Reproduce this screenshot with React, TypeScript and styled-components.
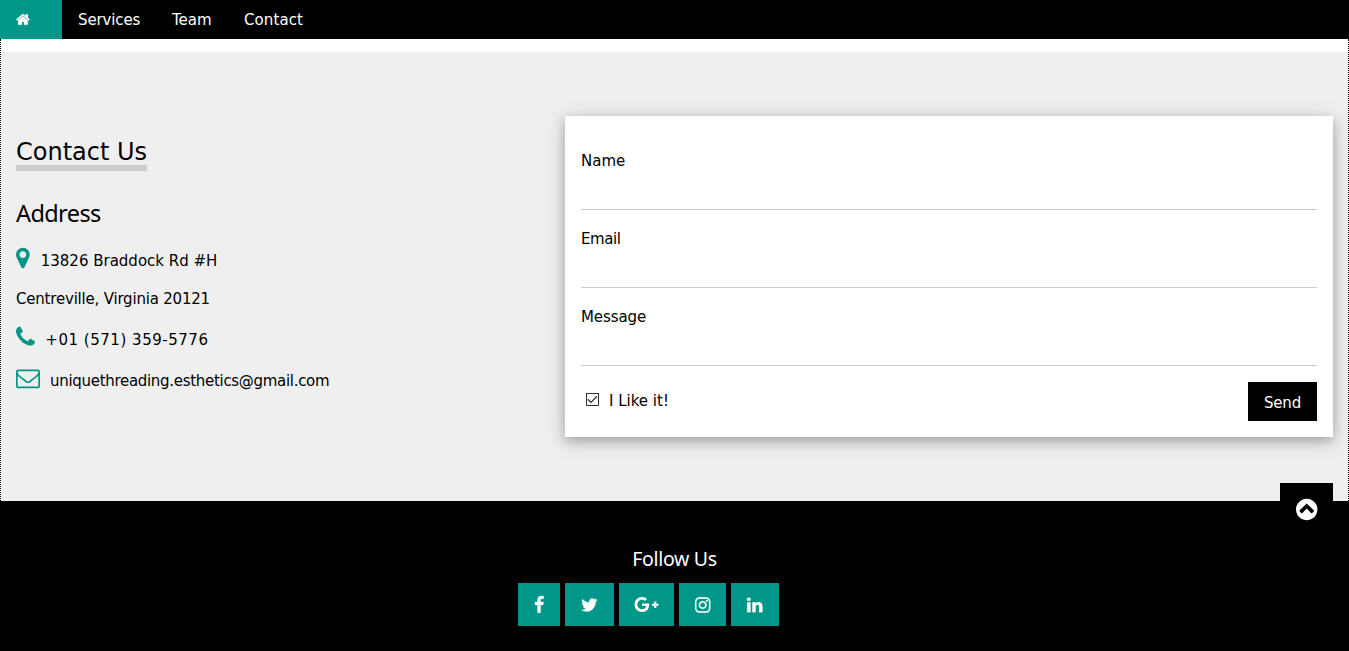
import React from "react";
import styled, { createGlobalStyle } from "styled-components";
import { FaGooglePlusG } from "react-icons/fa";

const TEAL = "#009688";

const GlobalStyle = createGlobalStyle`
  *, *::before, *::after { box-sizing: border-box; }
  body {
    margin: 0;
    overflow: hidden;
    background: #fff;
    color: #000;
    font: 15px/22.5px Verdana, "DejaVu Sans", sans-serif;
  }
`;

const Page = styled.div`
  display: flex;
  flex-direction: column;
  height: 651px;
`;

const NavBar = styled.nav`
  display: flex;
  height: 39px;
  background: #000;
`;

const NavLink = styled.a<{ $active?: boolean; $width: number; $spacing?: number }>`
  display: flex;
  align-items: center;
  width: ${(p) => p.$width}px;
  padding: ${(p) => (p.$active ? 0 : 2)}px 0 0 16px;
  color: #fff;
  background: ${(p) => (p.$active ? TEAL : "transparent")};
  letter-spacing: ${(p) => p.$spacing ?? 0}px;
  white-space: nowrap;
`;

const Content = styled.main`
  height: 462px;
  padding-top: 13px;
  border: dotted #000;
  border-width: 0 1px;
`;

const ContactSection = styled.section`
  display: flex;
  justify-content: space-between;
  height: 449px;
  padding: 64px 15px;
  background: #efefef;
`;

const Details = styled.div`
  display: flex;
  flex-direction: column;
  align-items: flex-start;
  padding-top: 17px;
`;

const Title = styled.span`
  height: 38px;
  border-bottom: 6px solid #ccc;
  font-size: 24px;
  line-height: 38px;
`;

const Subtitle = styled.h3`
  margin: 24px 0 0;
  font: 400 23.5px/36px "Segoe UI", "Noto Sans", sans-serif;
  letter-spacing: -0.6px;
`;

const DetailLine = styled.p<{ $top: number; $gap?: number; $spacing?: number }>`
  display: flex;
  align-items: flex-end;
  gap: ${(p) => p.$gap ?? 0}px;
  height: 24px;
  margin: ${(p) => p.$top}px 0 0;
  letter-spacing: ${(p) => p.$spacing ?? 0}px;
  line-height: 18px;
  white-space: nowrap;
  svg { align-self: flex-start; color: ${TEAL}; }
`;

const FormCard = styled.form`
  width: 768px;
  height: 321px;
  padding: 16px;
  background: #fff;
  box-shadow: 0 4px 10px 0 rgba(0, 0, 0, 0.2), 0 4px 20px 0 rgba(0, 0, 0, 0.19);
`;

const Field = styled.label<{ $spacing?: number }>`
  display: flex;
  flex-direction: column;
  height: 78px;
  padding-top: 18px;
  letter-spacing: ${(p) => p.$spacing ?? 0}px;
`;

const Input = styled.input`
  width: 100%;
  height: 37px;
  margin-top: auto;
  padding: 8px 0;
  border: 0;
  border-bottom: 1px solid #ccc;
  outline: 0;
  background: transparent;
  font: inherit;
`;

const FormFooter = styled.div`
  display: flex;
  justify-content: space-between;
  padding-top: 16px;
`;

const CheckLabel = styled.label`
  display: flex;
  align-items: flex-start;
  gap: 10px;
  height: 36px;
  padding: 8px 0 0 5px;
  svg { margin-top: 3px; }
`;

const SendButton = styled.button`
  width: 69px;
  height: 39px;
  padding: 4px 0 0;
  border: 0;
  color: #fff;
  background: #000;
  font: inherit;
  letter-spacing: -0.2px;
`;

const Footer = styled.footer`
  position: relative;
  display: flex;
  flex-direction: column;
  align-items: center;
  height: 150px;
  padding-top: 43px;
  background: #000;
  color: #fff;
`;

const TopButton = styled.a`
  position: absolute;
  top: -18px;
  right: 16px;
  display: flex;
  justify-content: center;
  width: 53px;
  height: 52px;
  padding-top: 14px;
  background: #000;
`;

const FollowTitle = styled.h5`
  margin: 0;
  font: 400 19.5px/30px "Segoe UI", "Noto Sans", sans-serif;
  letter-spacing: -0.3px;
`;

const SocialRow = styled.div`
  display: flex;
  gap: 5px;
  width: 313px;
  margin-top: 9px;
`;

const SocialLink = styled.a<{ $width: number }>`
  display: flex;
  align-items: center;
  justify-content: center;
  width: ${(p) => p.$width}px;
  height: 43px;
  background: ${TEAL};
  color: #fff;
`;

const glyphs = {
  home: { x: 64, w: 1664, d: "M1472 992v480q0 26-19 45t-45 19h-384v-384h-256v384h-384q-26 0-45-19t-19-45v-480q0-1 .5-3t.5-3l575-474 575 474q1 2 1 6zm223-69l-62 74q-8 9-21 11h-3q-13 0-21-7l-692-577-692 577q-12 8-24 7-13-2-21-11l-62-74q-8-10-7-23.5t11-21.5l719-599q32-26 76-26t76 26l244 204v-195q0-14 9-23t23-9h192q14 0 23 9t9 23v408l219 182q10 8 11 21.5t-7 23.5z" },
  marker: { x: 384, w: 1024, d: "M1152 640q0-106-75-181t-181-75-181 75-75 181 75 181 181 75 181-75 75-181zm256 0q0 109-33 179l-364 774q-16 33-47.5 52t-67.5 19-67.5-19-46.5-52l-365-774q-33-70-33-179 0-212 150-362t362-150 362 150 150 362z" },
  phone: { x: 192, w: 1408, d: "M1600 1240q0 27-10 70.5t-21 68.5q-21 50-122 106-94 51-186 51-27 0-52.5-3.5t-57.5-12.5-47.5-14.5-55.5-20.5-49-18q-98-35-175-83-128-79-264.5-215.5t-215.5-264.5q-48-77-83-175-3-9-18-49t-20.5-55.5-14.5-47.5-12.5-57.5-3.5-52.5q0-92 51-186 56-101 106-122 25-11 68.5-21t70.5-10q14 0 21 3 18 6 53 76 11 19 30 54t35 63.5 31 53.5q3 4 17.5 25t21.5 35.5 7 28.5q0 20-28.5 50t-62 55-62 53-28.5 46q0 9 5 22.5t8.5 20.5 14 24 11.5 19q76 137 174 235t235 174q2 1 19 11.5t24 14 20.5 8.5 22.5 5q18 0 46-28.5t53-62 55-62 50-28.5q14 0 28.5 7t35.5 21.5 25 17.5q25 15 53.5 31t63.5 35 54 30q70 35 76 53 3 7 3 21z" },
  envelope: { x: 0, w: 1792, d: "M1664 1504v-768q-32 36-69 66-268 206-426 338-51 43-83 67t-86.5 48.5-102.5 24.5h-2q-48 0-102.5-24.5t-86.5-48.5-83-67q-158-132-426-338-37-30-69-66v768q0 13 9.5 22.5t22.5 9.5h1472q13 0 22.5-9.5t9.5-22.5zm0-1051v-24.5l-.5-13-3-12.5-5.5-9-9-7.5-14-2.5h-1472q-13 0-22.5 9.5t-9.5 22.5q0 168 147 284 193 152 401 317 6 5 35 29.5t46 37.5 44.5 31.5 50.5 27.5 43 9h2q20 0 43-9t50.5-27.5 44.5-31.5 46-37.5 35-29.5q208-165 401-317 54-43 100.5-115.5t46.5-131.5zm128-37v1088q0 66-47 113t-113 47h-1472q-66 0-113-47t-47-113v-1088q0-66 47-113t113-47h1472q66 0 113 47t47 113z" },
  facebook: { x: 384, w: 1024, d: "M1343 12v264h-157q-86 0-116 36t-30 108v189h293l-39 296h-254v759h-306v-759h-255v-296h255v-218q0-186 104-288.5t277-102.5q147 0 228 12z" },
  twitter: { x: 64, w: 1664, d: "M1684 408q-67 98-162 167 1 14 1 42 0 130-38 259.5t-115.5 248.5-184.5 210.5-258 146-323 54.5q-271 0-496-145 35 4 78 4 225 0 401-138-105-2-188-64.5t-114-159.5q33 5 61 5 43 0 85-11-112-23-185.5-111.5t-73.5-205.5v-4q68 38 146 41-66-44-105-115t-39-154q0-88 44-163 121 149 294.5 238.5t371.5 99.5q-8-38-8-74 0-134 94.5-228.5t228.5-94.5q140 0 236 102 109-21 205-78-37 115-142 178 93-10 186-50z" },
  instagram: { x: 128, w: 1536, d: "M1152 896q0-106-75-181t-181-75-181 75-75 181 75 181 181 75 181-75 75-181zm138 0q0 164-115 279t-279 115-279-115-115-279 115-279 279-115 279 115 115 279zm108-410q0 38-27 65t-65 27-65-27-27-65 27-65 65-27 65 27 27 65zm-502-220q-7 0-76.5-.5t-105.5 0-96.5 3-103 10-71.5 18.5q-50 20-88 58t-58 88q-11 29-18.5 71.5t-10 103-3 96.5 0 105.5.5 76.5-.5 76.5 0 105.5 3 96.5 10 103 18.5 71.5q20 50 58 88t88 58q29 11 71.5 18.5t103 10 96.5 3 105.5 0 76.5-.5 76.5.5 105.5 0 96.5-3 103-10 71.5-18.5q50-20 88-58t58-88q11-29 18.5-71.5t10-103 3-96.5 0-105.5-.5-76.5.5-76.5 0-105.5-3-96.5-10-103-18.5-71.5q-20-50-58-88t-88-58q-29-11-71.5-18.5t-103-10-96.5-3-105.5 0-76.5.5zm768 630q0 229-5 317-10 208-124 322t-322 124q-88 5-317 5t-317-5q-208-10-322-124t-124-322q-5-88-5-317t5-317q10-208 124-322t322-124q88-5 317-5t317 5q208 10 322 124t124 322q5 88 5 317z" },
  linkedin: { x: 128, w: 1536, d: "M477 625v991h-330v-991h330zm21-306q1 73-50.5 122t-135.5 49h-2q-82 0-132-49t-50-122q0-74 51.5-122.5t134.5-48.5 133 48.5 51 122.5zm1166 729v568h-329v-530q0-105-40.5-164.5t-126.5-59.5q-63 0-105.5 34.5t-63.5 85.5q-11 30-11 81v553h-329q2-399 2-647t-1-296l-1-48h329v144h-2q20-32 41-56t56.5-52 87-43.5 114.5-15.5q171 0 275 113.5t104 332.5z" },
  up: { x: 128, w: 1536, d: "M1395 1037l-102 102q-19 19-45 19t-45-19L896 832l-307 307q-19 19-45 19t-45-19l-102-102q-19-19-19-45t19-45l454-454q19-19 45-19t45 19l454 454q19 19 19 45t-19 45zM1664 896q0 209-103 385.5t-279.5 279.5-385.5 103-385.5-103-279.5-279.5-103-385.5 103-385.5 279.5-279.5 385.5-103 385.5 103 279.5 279.5 103 385.5z" },
};

const Icon = ({ name, size, weight = 0 }: { name: keyof typeof glyphs; size: number; weight?: number }) => {
  const g = glyphs[name];
  return (
    <svg
      width={(size * g.w) / 1792}
      height={size}
      viewBox={`${g.x} 0 ${g.w} 1792`}
      fill="currentColor"
      fillRule="evenodd"
      stroke={weight ? "currentColor" : "none"}
      strokeWidth={weight}
      overflow="visible"
    >
      <path d={g.d} />
    </svg>
  );
};

const CheckMark = () => (
  <svg width="13" height="13" viewBox="0 0 13 13" fill="none" stroke="#333">
    <rect x=".5" y=".5" width="12" height="12" />
    <path d="M1.8 6.2l3.2 3.2 6-6.1" strokeWidth="1.3" />
  </svg>
);

export default function App() {
  return (
    <Page>
      <GlobalStyle />
      <NavBar>
        <NavLink $active $width={62}><Icon name="home" size={15} weight={30} /></NavLink>
        <NavLink $width={94} $spacing={-0.13}>Services</NavLink>
        <NavLink $width={72}>Team</NavLink>
        <NavLink $width={91} $spacing={0.1}>Contact</NavLink>
      </NavBar>
      <Content>
        <ContactSection>
          <Details>
            <Title>Contact Us</Title>
            <Subtitle>Address</Subtitle>
            <DetailLine $top={15} $gap={11}><Icon name="marker" size={24} />13826 Braddock Rd #H</DetailLine>
            <DetailLine $top={14} $spacing={-0.2}>Centreville, Virginia 20121</DetailLine>
            <DetailLine $top={17} $gap={10.5} $spacing={0.52}><Icon name="phone" size={24} />+01 (571) 359-5776</DetailLine>
            <DetailLine $top={17} $gap={10} $spacing={-0.3}><Icon name="envelope" size={24} />uniquethreading.esthetics@gmail.com</DetailLine>
          </Details>
          <FormCard>
            <Field>Name<Input /></Field>
            <Field $spacing={-0.45}>Email<Input /></Field>
            <Field $spacing={-0.1}>Message<Input /></Field>
            <FormFooter>
              <CheckLabel><CheckMark />I Like it!</CheckLabel>
              <SendButton type="button">Send</SendButton>
            </FormFooter>
          </FormCard>
        </ContactSection>
      </Content>
      <Footer>
        <TopButton><Icon name="up" size={25} /></TopButton>
        <FollowTitle>Follow Us</FollowTitle>
        <SocialRow>
          <SocialLink $width={42}><Icon name="facebook" size={18} weight={30} /></SocialLink>
          <SocialLink $width={49}><Icon name="twitter" size={18} weight={30} /></SocialLink>
          <SocialLink $width={55}><FaGooglePlusG size={25} /></SocialLink>
          <SocialLink $width={47}><Icon name="instagram" size={18} weight={20} /></SocialLink>
          <SocialLink $width={48}><Icon name="linkedin" size={18} weight={20} /></SocialLink>
        </SocialRow>
      </Footer>
    </Page>
  );
}
